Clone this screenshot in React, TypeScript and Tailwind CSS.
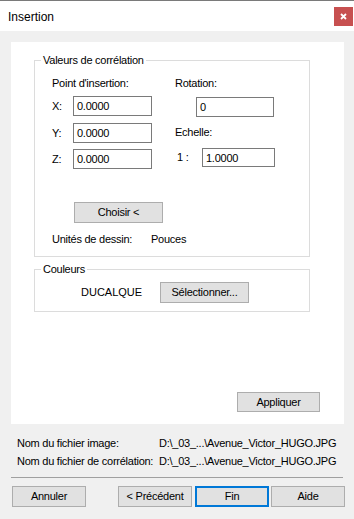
import React from "react";

const Field = ({ value, w, h = 20 }: { value: string; w: string; h?: number }) => (
  <div
    className={`${w} ${h === 20 ? "h-[20px]" : "h-[19px]"} border border-[#7a7a7a] bg-white pl-[3px] flex items-center leading-[14px]`}
  >
    {value}
  </div>
);

const Btn = ({ label, cls = "", focus = false }: { label: string; cls?: string; focus?: boolean }) => (
  <div
    className={`h-[21px] w-[74px] flex items-center justify-center bg-[#e1e1e1] ${
      focus ? "border-2 border-[#0078d7]" : "border border-[#adadad]"
    } ${cls}`}
  >
    {label}
  </div>
);

export default function App() {
  return (
    <div
      className="w-[354px] h-[519px] bg-[#f0f0f0] text-[11px] tracking-[-0.25px] text-black overflow-hidden"
      style={{ fontFamily: '"Liberation Sans", Arial, sans-serif' }}
    >
      {/* Title bar */}
      <div className="h-px bg-[#7a7a7a]" />
      <div className="h-[30px] bg-white flex items-center">
        <span className="pl-[8px] text-[12px] tracking-normal pt-[1px]">Insertion</span>
        <div className="ml-auto mr-[1px] w-[19px] h-[19px] bg-[#c75050] flex items-center justify-center">
          <svg width="7" height="7" viewBox="0 0 7 7">
            <path d="M1 1 L6 6 M6 1 L1 6" stroke="white" strokeWidth="1.8" />
          </svg>
        </div>
      </div>

      {/* Body */}
      <div className="pl-[11px] pt-[11px]">
        <div className="w-[333px] h-[382px] bg-white flex flex-col">
          {/* Group 1 */}
          <div className="relative ml-[23px] mt-[18px] w-[276px] h-[197px] border border-[#dcdcdc]">
            <span className="absolute -top-[8px] left-[6px] bg-white px-[2px] leading-[14px]">
              Valeurs de corrélation
            </span>
            <div className="flex pl-[17px] pt-[15px]">
              <div className="w-[123px] flex flex-col">
                <div className="h-[14px] leading-[14px]">Point d'insertion:</div>
                <div className="mt-[6px] flex items-center">
                  <span className="w-[21px]">X:</span>
                  <Field value="0.0000" w="w-[79px]" />
                </div>
                <div className="mt-[7px] flex items-center">
                  <span className="w-[21px]">Y:</span>
                  <Field value="0.0000" w="w-[79px]" />
                </div>
                <div className="mt-[6px] flex items-center">
                  <span className="w-[21px]">Z:</span>
                  <Field value="0.0000" w="w-[79px]" />
                </div>
              </div>
              <div className="flex flex-col">
                <div className="h-[14px] leading-[14px]">Rotation:</div>
                <div className="mt-[7px] ml-[21px]">
                  <Field value="0" w="w-[78px]" />
                </div>
                <div className="mt-[8px] h-[14px] leading-[14px]">Echelle:</div>
                <div className="mt-[9px] flex items-center">
                  <span className="w-[27px] pl-[2px]">1 :</span>
                  <Field value="1.0000" w="w-[73px]" h={19} />
                </div>
              </div>
            </div>
            <div className="ml-[39px] mt-[33px] w-[89px] h-[21px] flex items-center justify-center bg-[#e1e1e1] border border-[#adadad]">
              Choisir &lt;
            </div>
            <div className="flex pl-[17px] mt-[9px] leading-[14px]">
              <span className="w-[99px]">Unités de dessin:</span>
              <span>Pouces</span>
            </div>
          </div>

          {/* Group 2 */}
          <div className="relative ml-[23px] mt-[12px] w-[276px] h-[43px] border border-[#dcdcdc]">
            <span className="absolute -top-[8px] left-[6px] bg-white px-[2px] leading-[14px]">
              Couleurs
            </span>
            <div className="flex items-center pl-[46px] pt-[12px]">
              <span className="w-[79px] tracking-normal">DUCALQUE</span>
              <div className="w-[89px] h-[21px] flex items-center justify-center bg-[#e1e1e1] border border-[#adadad]">
                Sélectionner...
              </div>
            </div>
          </div>

          <div className="mt-auto mb-[12px] self-end mr-[24px] w-[83px] h-[20px] flex items-center justify-center bg-[#e1e1e1] border border-[#adadad]">
            Appliquer
          </div>
        </div>

        {/* File info */}
        <div className="mt-[10px] pl-[6px] leading-[18px]">
          <div className="flex">
            <span className="w-[142px]">Nom du fichier image:</span>
            <span>D:\_03_...\Avenue_Victor_HUGO.JPG</span>
          </div>
          <div className="flex">
            <span className="w-[142px]">Nom du fichier de corrélation:</span>
            <span>D:\_03_...\Avenue_Victor_HUGO.JPG</span>
          </div>
        </div>

        <div className="mt-[7px] w-[332px] h-px bg-[#a0a0a0]" />

        <div className="mt-[8px] flex">
          <Btn label="Annuler" cls="ml-[1px]" />
          <Btn label="< Précédent" cls="ml-[32px]" />
          <Btn label="Fin" cls="ml-[3px]" focus />
          <Btn label="Aide" cls="ml-[2px]" />
        </div>
      </div>
    </div>
  );
}
